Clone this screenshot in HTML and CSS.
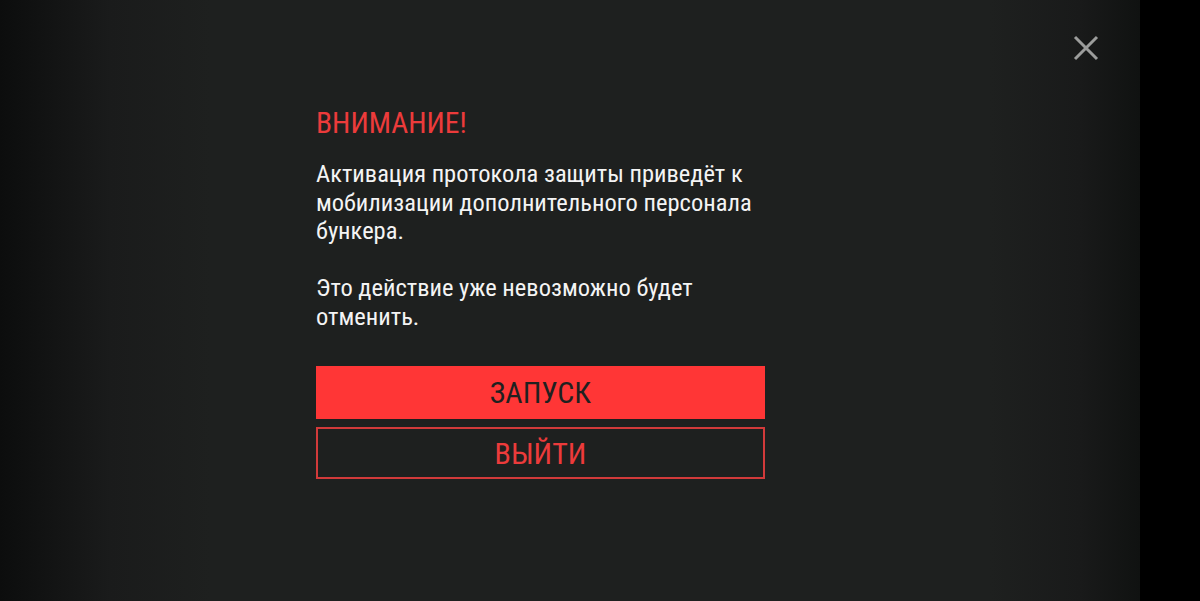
FILE: index.html
```html
<!DOCTYPE html>
<html lang="ru">
<head>
    <meta charset="UTF-8">
    <meta name="viewport" content="width=device-width, initial-scale=1.0">
    <title>Протокол защиты</title>
    <link rel="stylesheet" href="styles.css">
</head>
<body>

<div class="screen">
    <div class="app">
        <button class="close" aria-label="Закрыть">
            <svg width="28" height="28" viewBox="0 0 28 28">
                <path d="M3 3 L25 25 M25 3 L3 25" stroke="#9c9d9c" stroke-width="3" fill="none"/>
            </svg>
        </button>

        <div class="dialog">
            <h2 class="title">ВНИМАНИЕ!</h2>
            <p class="text">Активация протокола защиты приведёт к мобилизации дополнительного персонала бункера.</p>
            <p class="text">Это действие уже невозможно будет отменить.</p>

            <div class="actions">
                <button class="btn btn-main">ЗАПУСК</button>
                <button class="btn btn-outline">ВЫЙТИ</button>
            </div>
        </div>
    </div>
    <!-- системная полоса навигации -->
    <div class="nav-bar"></div>
</div>

</body>
</html>
```
FILE: styles.css
```css
body {
    margin: 0;
    font-family: "Roboto Condensed", Roboto, sans-serif;
    background: #000;
    overflow: hidden;
}
.screen {
    display: flex;
    height: 601px;
}
.app {
    position: relative;
    width: 1140px;
    background: linear-gradient(to right, #0c0d0d 0px, #1a1b1b 110px, #1e201f 210px, #1e201f 990px, #191a1a 1080px, #101211 1140px);
}
.nav-bar {
    flex: 1;
    background: #000;
}
.close {
    position: absolute;
    top: 34px;
    left: 1072px;
    padding: 0;
    background: none;
    border: none;
    cursor: pointer;
}
.close svg {
    display: block;
}
.dialog {
    width: 449px;
    padding: 106px 0 0 316px;
}
.title {
    margin: 0 0 20px;
    font-size: 29.5px;
    line-height: 34px;
    font-weight: 400;
    color: #ec3b3b;
}
.text {
    margin: 0 0 28.5px;
    font-size: 24.5px;
    line-height: 28.5px;
    color: #f4f4f4;
}
.actions {
    display: flex;
    flex-direction: column;
    gap: 8px;
    margin-top: 35px;
}
.btn {
    height: 53px;
    width: 100%;
    font-family: inherit;
    font-size: 30px;
    padding: 0;
    cursor: pointer;
}
.btn-main {
    background: #ff3636;
    color: #1f2120;
    border: none;
}
.btn-outline {
    height: 52px;
    background: transparent;
    color: #ec3b3b;
    border: 2px solid #d23a3a;
}
```
